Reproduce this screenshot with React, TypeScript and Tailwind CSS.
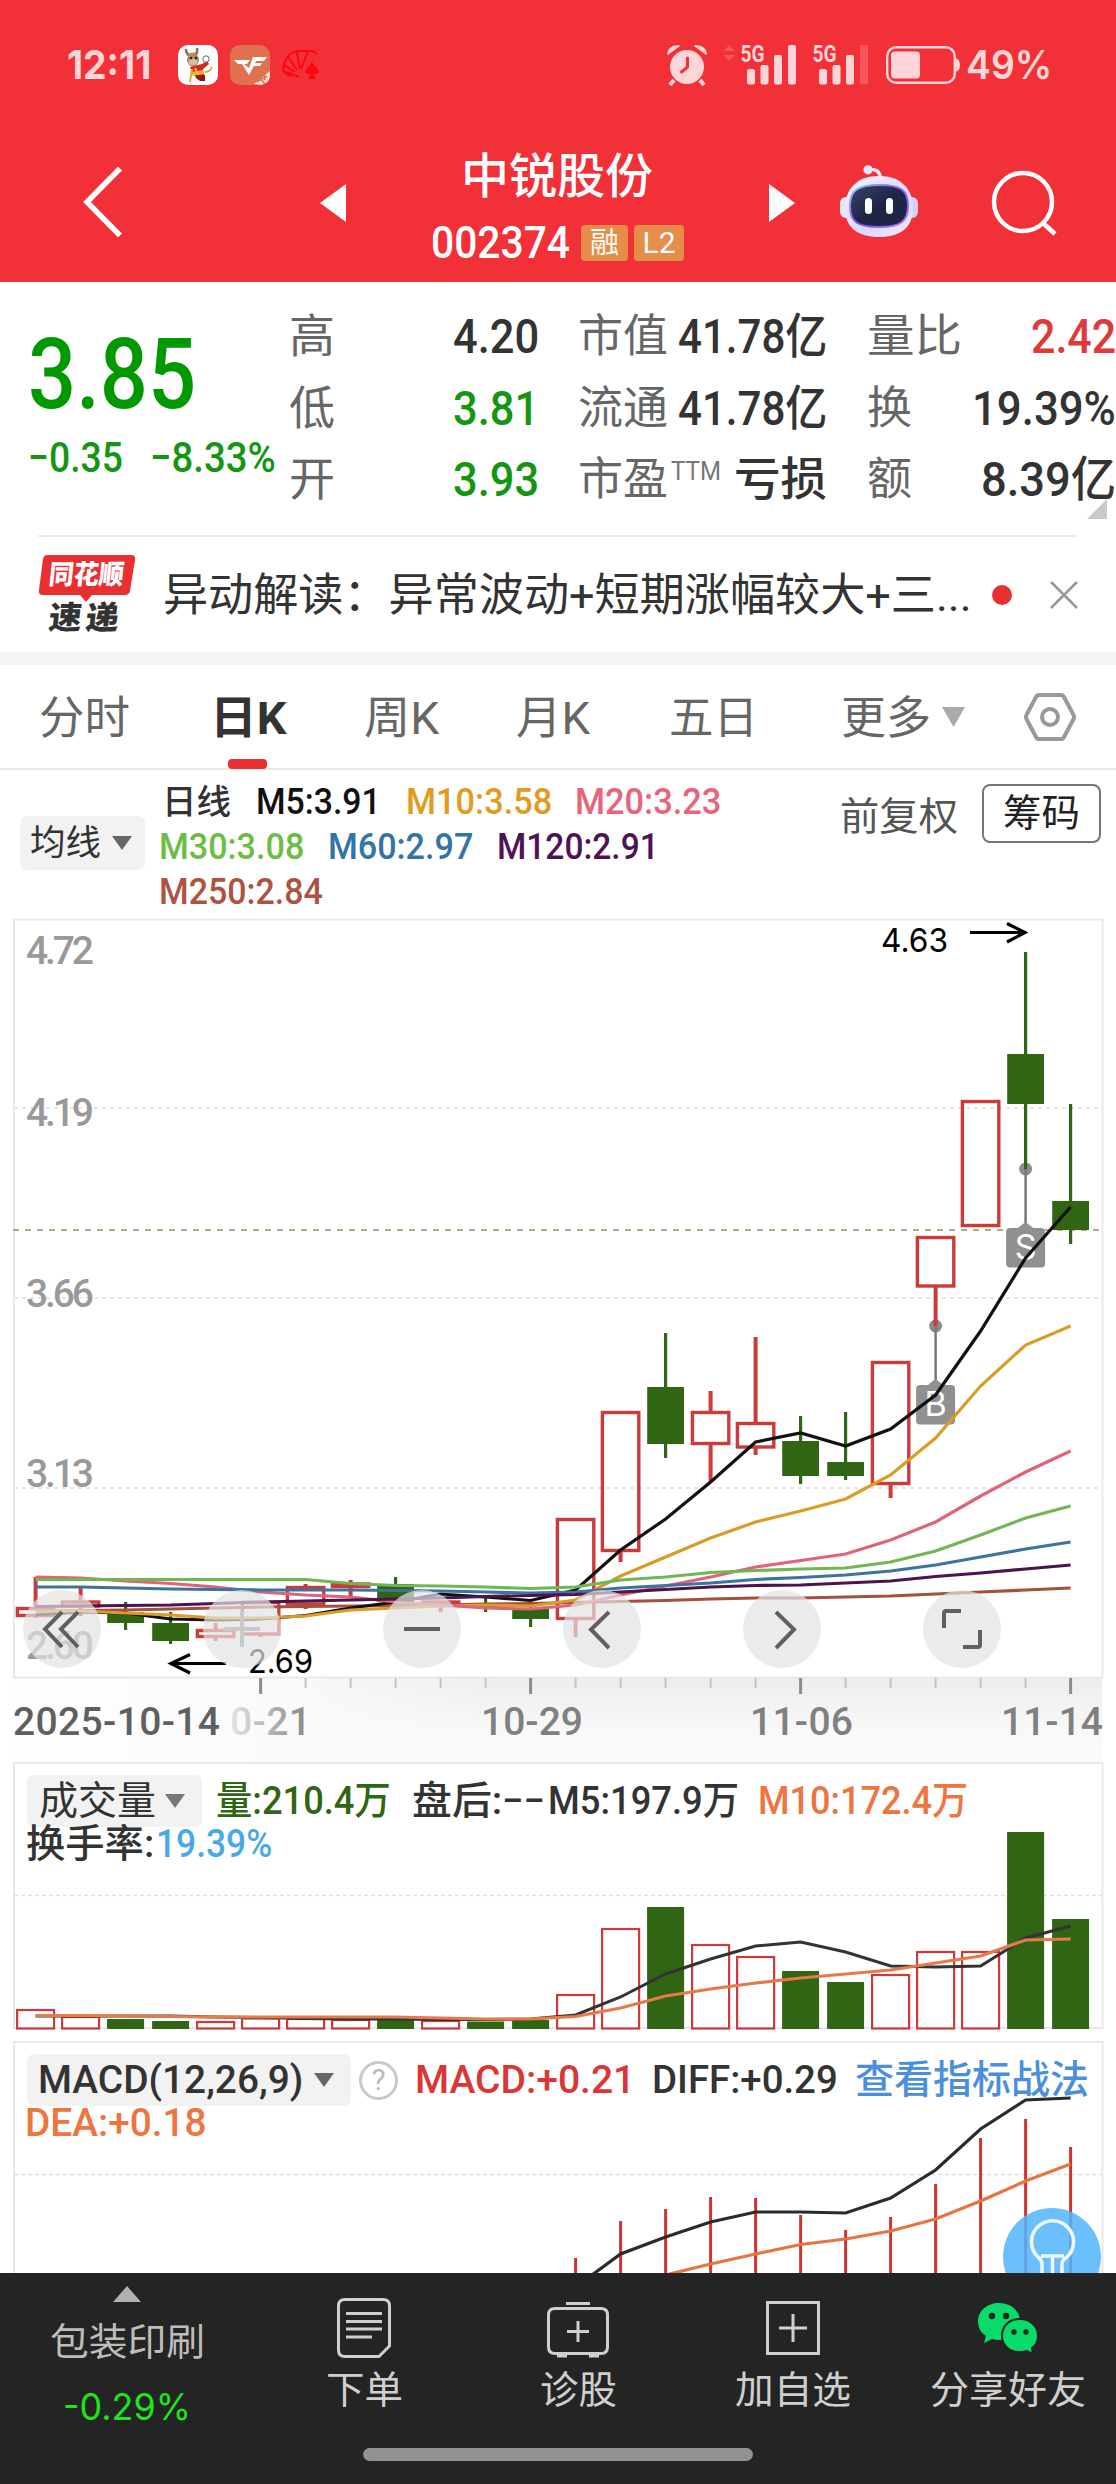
import React, { useLayoutEffect, useRef, useState } from "react";

type FitProps = { className?: string; children: React.ReactNode };

/** Single line of text condensed or widened to fill the width of its box. */
function Fit({ className = "", children }: FitProps) {
  const outer = useRef<HTMLSpanElement>(null);
  const inner = useRef<HTMLSpanElement>(null);
  const [scale, setScale] = useState(1);
  useLayoutEffect(() => {
    if (outer.current && inner.current && inner.current.offsetWidth > 0) {
      setScale(outer.current.clientWidth / inner.current.offsetWidth);
    }
  }, [children]);
  return (
    <span ref={outer} className={"block shrink-0 whitespace-nowrap " + className}>
      <span ref={inner} className="inline-block origin-left align-top" style={{ transform: `scaleX(${scale})` }}>
        {children}
      </span>
    </span>
  );
}

const RED = "#cc3b3b";
const GREEN = "#306514";
const X0 = 35.6;
const STEP = 45;
const cx = (i: number) => X0 + i * STEP;

type Candle = { up: boolean; top: number; bottom: number; high: number; low: number };
const c = (up: boolean, top: number, bottom: number, high: number, low: number): Candle => ({ up, top, bottom, high, low });

const candles: Candle[] = [
  c(true, 1608.5, 1615.5, 1577, 1618),
  c(true, 1602, 1606, 1588, 1616),
  c(false, 1612, 1623, 1602, 1630),
  c(false, 1623, 1641, 1612, 1644),
  c(true, 1630.5, 1636.5, 1623, 1641),
  c(true, 1602.5, 1634, 1601, 1637),
  c(true, 1587.5, 1604, 1584, 1609),
  c(true, 1584, 1586.5, 1580, 1596),
  c(false, 1584, 1602, 1577, 1604),
  c(true, 1602, 1604.5, 1601, 1612),
  c(false, 1604, 1607, 1596, 1612),
  c(false, 1609, 1619, 1604, 1627),
  c(true, 1519.5, 1618.5, 1519, 1637),
  c(true, 1412.5, 1550.5, 1412, 1562),
  c(false, 1387, 1444, 1333, 1458),
  c(true, 1412.5, 1443.5, 1391, 1481),
  c(true, 1423.5, 1447, 1337, 1455),
  c(false, 1441, 1476, 1416, 1484),
  c(false, 1462, 1476, 1412, 1480),
  c(true, 1362.5, 1483.5, 1362, 1498),
  c(true, 1237.5, 1286, 1237, 1326),
  c(true, 1101.5, 1225.5, 1101, 1225),
  c(false, 1054, 1104, 952, 1169),
  c(false, 1201, 1230, 1104, 1244),
];

const averages: { color: string; y: number[] }[] = [
  { color: "#a4503f", y: [1611, 1610.5, 1610, 1609, 1608, 1607, 1606.5, 1606, 1605.5, 1605, 1604, 1603.5, 1602.5, 1601.5, 1600.5, 1599, 1598, 1598, 1597, 1596, 1594, 1592, 1590, 1588] },
  { color: "#111111", y: [1615, 1612, 1613, 1619, 1620, 1619, 1615.5, 1608, 1602, 1594, 1597, 1600.5, 1590, 1550, 1519, 1482, 1442, 1433, 1446, 1429, 1395, 1331, 1258, 1207] },
  { color: "#d99c26", y: [1611, 1611, 1613, 1615, 1618, 1618, 1616, 1610, 1608, 1606, 1605, 1606, 1600, 1576, 1557, 1538, 1522, 1511, 1499, 1475, 1438, 1386, 1345, 1326] },
  { color: "#e06478", y: [1577, 1578, 1581, 1583.5, 1587, 1592, 1595, 1597, 1602, 1605, 1608, 1609, 1605, 1595, 1586, 1577, 1567, 1560.5, 1554, 1540, 1522, 1496, 1472, 1451] },
  { color: "#3d739f", y: [1587, 1587, 1588, 1589, 1589.5, 1590, 1590, 1590, 1590.5, 1591, 1592, 1593, 1592, 1588, 1585.5, 1583, 1579.5, 1577.5, 1575, 1571, 1565, 1557, 1549, 1542] },
  { color: "#4a154b", y: [1606.5, 1606, 1605.5, 1605, 1603.5, 1602, 1601, 1600, 1599, 1598, 1596.5, 1595.5, 1594.5, 1592, 1589.5, 1587, 1585.5, 1585, 1583, 1581, 1576.5, 1573, 1569, 1565] },
  { color: "#70b655", y: [1579.5, 1579.5, 1579.5, 1579.5, 1579.5, 1579.5, 1579.5, 1583.5, 1585.5, 1586, 1587, 1588.5, 1587, 1580, 1577, 1572.5, 1570.5, 1569, 1568, 1562, 1551, 1535, 1518, 1506] },
];

const volumes: [boolean, number][] = [
  [true, 2010], [true, 2017], [false, 2019], [false, 2021], [true, 2022], [true, 2018.5], [true, 2019], [true, 2020],
  [false, 2020], [true, 2021], [false, 2021.5], [false, 2020], [true, 1995], [true, 1929], [false, 1907], [true, 1945],
  [true, 1957], [false, 1971], [false, 1982], [true, 1975], [true, 1952], [true, 1952], [false, 1832], [false, 1919],
];
const vol5 = [2016, 2016, 2016, 2016, 2017, 2017.5, 2018.5, 2019, 2019, 2019.5, 2019.5, 2019, 2015, 1997, 1974, 1959, 1946, 1942, 1952, 1966, 1967, 1966, 1938, 1926];
const vol10 = [2015.5, 2015.5, 2016, 2016.5, 2017, 2017, 2017, 2017, 2017, 2018, 2019, 2019, 2016.5, 2008, 1996, 1989, 1983, 1978, 1974, 1970, 1963, 1956, 1940, 1939];

const macdTops = [2258, 2221, 2209, 2197, 2198, 2215, 2230, 2217, 2184, 2138, 2119, 2147];
const diff = [2287, 2254, 2237, 2222, 2212, 2212, 2213, 2198, 2170, 2129, 2100, 2098];
const dea = [2290, 2284, 2275, 2264, 2254, 2244.5, 2239, 2231, 2219, 2201, 2181, 2164];

const points = (ys: number[], from = 0) => ys.map((y, i) => `${cx(i + from)},${y}`).join(" ");

function Down({ className }: { className: string }) {
  return (
    <svg viewBox="0 0 20 14" preserveAspectRatio="none" className={"shrink-0 " + className}>
      <path d="M0 0H20L10 14Z" fill="currentColor" />
    </svg>
  );
}

function StatusBar() {
  return (
    <div className="flex h-[130px] items-center pl-[67px] text-[#ffd5d7]">
      <Fit className="w-[84px] [font-family:Inter,sans-serif] text-[40px] leading-[44px] font-bold">12:11</Fit>
      <svg viewBox="0 0 40 40" className="ml-[27px] h-10 w-10">
        <rect width="40" height="40" rx="10" fill="#fff" />
        <path d="M8 4Q8 9 12 11M19 3Q20 8 17 10" stroke="#777" strokeWidth="2.6" fill="none" />
        <path d="M11 8L18 7L17 11L11 11Z" fill="#e8951f" />
        <ellipse cx="15" cy="15" rx="6" ry="6.5" fill="#b1896c" />
        <ellipse cx="15" cy="17" rx="4.5" ry="3" fill="#d8bba5" />
        <circle cx="13" cy="13" r="1.2" fill="#222" />
        <circle cx="18" cy="13" r="1.2" fill="#222" />
        <path d="M12 22L24 19L29 16L31 19L25 24L26 30L15 30Z" fill="#d3271f" />
        <path d="M13 27L25 25L26 29L15 31Z" fill="#f0b429" />
        <path d="M17 23L20 29" stroke="#f3c23a" strokeWidth="2" />
        <circle cx="28" cy="14" r="3.2" fill="#fff" stroke="#666" strokeWidth="1" />
        <path d="M17 30H27L27 36H22L18 33Z" fill="#8e1914" />
        <path d="M14 24L12 37M27 27Q32 27 34 22" stroke="#dfa93d" strokeWidth="2" fill="none" />
      </svg>
      <svg viewBox="0 0 40 40" className="ml-3 h-10 w-10">
        <rect width="40" height="40" rx="10" fill="#e0714f" />
        <path d="M4 15H20L17 19H14L19 23L23 12H37L34 16H26L25 18H32L30 21H24L19 30L12 19H8Z" fill="#fff" />
        <path d="M24 39L40 26V31Q39 39 31 40Z" fill="#fbe3d5" />
        <path d="M27 37L37 31M30 33L35 39M34 29L35 35" stroke="#e0714f" strokeWidth="1.6" />
      </svg>
      <svg viewBox="0 0 38 30" className="ml-[12px] h-[30px] w-[38px]">
        <path d="M10 26Q3 25 1 20L2 14Q4 7 10 3Q15 0 21 1Q30 -1 35 4M2 15L13 22M6 7L15 20M15 2L18 19M26 1L19 19M4 22L17 27" stroke="#fa0710" strokeWidth="2" fill="none" />
        <path d="M30 12Q32 16 36 19Q39 24 32 24L34 29H26L28 24Q21 24 24 19Q28 16 30 12Z" fill="#fa0710" />
      </svg>

      <svg viewBox="0 0 40 42" className="ml-[347px] h-[42px] w-10">
        <circle cx="20" cy="23" r="17" fill="currentColor" />
        <path d="M7 36L3 41M33 36L37 41" stroke="currentColor" strokeWidth="4" />
        <path d="M1 9Q3 1 12 2L1 10ZM39 9Q37 1 28 2L39 10Z" fill="currentColor" stroke="currentColor" strokeWidth="1.5" strokeLinejoin="round" />
        <path d="M20.500 14V23L14.500 28" stroke="#f03038" strokeWidth="3" fill="none" strokeLinecap="round" />
      </svg>
      <Signal arrows strong />
      <Signal strong={false} />
      <svg viewBox="0 0 74 38" className="ml-[17px] h-[38px] w-[74px]">
        <rect x="1.200" y="1.200" width="67.600" height="35.600" rx="9" fill="none" stroke="currentColor" strokeWidth="2.400" />
        <rect x="5" y="5.500" width="29" height="27" rx="4" fill="currentColor" />
        <path d="M69 12Q74 13 74 19Q74 25 69 26Z" fill="currentColor" />
      </svg>
      <Fit className="ml-[6px] w-[86px] [font-family:Inter,sans-serif] text-[40px] leading-[44px] font-semibold">49%</Fit>
    </div>
  );
}

function Signal({ arrows = false, strong }: { arrows?: boolean; strong: boolean }) {
  return (
    <svg
      viewBox={arrows ? "0 -10 73 62" : "16 -10 57 62"}
      className={arrows ? "ml-[17px] h-[62px] w-[73px] shrink-0" : "ml-[15px] h-[62px] w-[57px] shrink-0"}
    >
      {arrows && <path d="M5 1L11 7H0ZM5 17L0 11H11Z" fill="#f4575d" />}
      <rect x="23" y="25" width="8" height="15.500" rx="2" fill="currentColor" />
      <rect x="36.500" y="21" width="8" height="19.500" rx="2" fill="currentColor" />
      <rect x="50" y="11" width="8" height="29.500" rx="2" fill="currentColor" />
      <rect x="64" y="1" width="8" height="39.500" rx="2" fill={strong ? "currentColor" : "#f4575d"} />
      <text x="16.500" y="17.500" textLength="24" lengthAdjust="spacingAndGlyphs" fontFamily="Roboto, sans-serif" fontWeight="700" fontSize="24" fill="currentColor">5G</text>
    </svg>
  );
}

function Header() {
  return (
    <header className="h-[282px] bg-[#f23038]">
      <StatusBar />
      <div className="flex h-[152px] items-start text-white">
        <svg viewBox="0 0 40 70" className="mt-[37px] ml-[83px] h-[70px] w-10">
          <path d="M37 1.500L4 35L37 68.500" fill="none" stroke="#fff" strokeWidth="5.500" />
        </svg>
        <svg viewBox="0 0 26 38" className="mt-[54px] ml-[197px] h-[38px] w-[26px]"><path d="M26 0V38L0 19Z" fill="#fff" /></svg>
        <div className="ml-[85px] flex w-[254px] flex-col">
          <Fit className="mt-[20px] ml-[30px] w-[192px] text-[48px] leading-[54px] font-medium">中锐股份</Fit>
          <div className="mt-[17px] flex items-center">
            <Fit className="w-[139px] text-[44px] leading-[44px] font-medium">002374</Fit>
            <span className="ml-[11px] flex h-9 w-[47px] items-center justify-center rounded-[4px] bg-[#e58d49] text-[29px] leading-none">融</span>
            <span className="ml-[6px] flex h-9 w-[50px] items-center justify-center rounded-[4px] bg-[#e58d49] text-[30px] leading-none">L2</span>
          </div>
        </div>
        <svg viewBox="0 0 26 38" className="mt-[54px] ml-[84px] h-[38px] w-[26px]"><path d="M0 0V38L26 19Z" fill="#fff" /></svg>
        <svg viewBox="0 0 78 72" className="mt-[35px] ml-[45px] h-[72px] w-[78px]">
          <defs>
            <linearGradient id="shell" x1="0" y1="0" x2="1" y2="1"><stop offset="0" stopColor="#f7f6ff" /><stop offset="0.600" stopColor="#dcd6f8" /><stop offset="1" stopColor="#f3efff" /></linearGradient>
            <linearGradient id="rim" x1="0" y1="0" x2="1" y2="1"><stop offset="0" stopColor="#7fd3f5" /><stop offset="0.500" stopColor="#7f4be8" /><stop offset="1" stopColor="#a77cf0" /></linearGradient>
            <linearGradient id="face" x1="0" y1="0" x2="1" y2="1"><stop offset="0" stopColor="#3b4468" /><stop offset="0.500" stopColor="#1e2547" /><stop offset="1" stopColor="#1e2547" /></linearGradient>
          </defs>
          <path d="M28 5Q39 2 41 14" stroke="#e9e4fb" strokeWidth="3.500" fill="none" />
          <circle cx="28" cy="4.800" r="4.600" fill="#e9e4fb" />
          <rect x="0" y="32" width="12" height="21" rx="6" fill="#e9e6fc" />
          <rect x="66" y="32" width="12" height="21" rx="6" fill="#d5cff5" />
          <path d="M39 11C61 11 73 24 73 43C73 63 60 72 39 72C18 72 5 63 5 43C5 24 17 11 39 11Z" fill="url(#shell)" />
          <path d="M39 20C60 20 68 25 68 41C68 57 60 62 39 62C18 62 10 57 10 41C10 25 18 20 39 20Z" fill="url(#face)" stroke="url(#rim)" strokeWidth="2" />
          <rect x="25" y="33" width="7" height="16" rx="3.500" fill="#fff" />
          <rect x="46" y="33" width="7" height="16" rx="3.500" fill="#fff" />
        </svg>
        <svg viewBox="0 0 66 66" className="mt-[40px] ml-[73px] h-[66px] w-[66px]">
          <circle cx="32" cy="32" r="29" fill="none" stroke="#fff" strokeWidth="4.500" />
          <path d="M52 53L64 64" stroke="#fff" strokeWidth="4.500" />
        </svg>
      </div>
    </header>
  );
}

function Quote() {
  return (
    <section className="flex h-[253px] bg-white pt-[19px] text-[48px] leading-[71px] font-medium text-[#333]">
      <div className="flex w-[289px] shrink-0 flex-col pl-[28px] text-[#009a00]">
        <Fit className="mt-[22px] w-[168px] text-[98px] leading-[104px]">3.85</Fit>
        <div className="mt-[8px] flex text-[42px] leading-[46px] text-[#149614]">
          <Fit className="w-[95px]">−0.35</Fit>
          <Fit className="ml-[27px] w-[126px]">−8.33%</Fit>
        </div>
      </div>
      <div className="w-[250px] shrink-0">
        <div className="flex h-[71.500px] justify-between"><span className="text-[46px] font-normal text-[#666]">高</span><Fit className="w-[86px]">4.20</Fit></div>
        <div className="flex h-[71.500px] justify-between"><span className="text-[46px] font-normal text-[#666]">低</span><Fit className="w-[86px] text-[#149614]">3.81</Fit></div>
        <div className="flex h-[71.500px] justify-between"><span className="text-[46px] font-normal text-[#666]">开</span><Fit className="w-[86px] text-[#149614]">3.93</Fit></div>
      </div>
      <div className="ml-[39px] w-[249px] shrink-0">
        <div className="flex h-[71.500px] justify-between"><span className="text-[45px] font-normal text-[#666]">市值</span><Fit className="w-[149px]">41.78亿</Fit></div>
        <div className="flex h-[71.500px] justify-between"><span className="text-[45px] font-normal text-[#666]">流通</span><Fit className="w-[149px]">41.78亿</Fit></div>
        <div className="flex h-[71.500px] justify-between">
          <span className="flex text-[45px] font-normal text-[#666]">市盈<Fit className="-mt-[8px] ml-[3px] w-[50px] text-[26px] text-[#777]">TTM</Fit></span>
          <Fit className="w-[93px] text-[46px]">亏损</Fit>
        </div>
      </div>
      <div className="relative ml-[40px] w-[249px] shrink-0">
        <div className="flex h-[71.500px] justify-between"><Fit className="w-[95px] text-[45px] font-normal text-[#666]">量比</Fit><Fit className="w-[85px] text-[#dd3a3a]">2.42</Fit></div>
        <div className="flex h-[71.500px] justify-between"><span className="text-[45px] font-normal text-[#666]">换</span><Fit className="w-[144px]">19.39%</Fit></div>
        <div className="flex h-[71.500px] justify-between"><span className="text-[45px] font-normal text-[#666]">额</span><Fit className="w-[135px]">8.39亿</Fit></div>
        <svg viewBox="0 0 20 20" className="absolute right-[9px] bottom-[16px] h-5 w-5"><path d="M20 0V20H0Z" fill="#c9c9c9" /></svg>
      </div>
    </section>
  );
}

function News() {
  return (
    <section className="mx-[38px] flex h-[117px] items-center border-t-2 border-[#ececec]">
      <div className="relative h-[80px] w-[98px] shrink-0">
        <svg viewBox="0 0 98 80" className="absolute inset-0 h-full w-full">
          <path d="M9 0H93Q98 0 97 5L92 36Q91 40 87 40H54L48 47L42 40H5Q0 40 1 35L5 4Q6 0 9 0Z" fill="#e83033" />
        </svg>
        <Fit className="absolute top-[3px] left-[11px] w-[75px] -skew-x-6 text-[27px] leading-[34px] font-black text-white">同花顺</Fit>
        <Fit className="absolute top-[46px] left-[11px] w-[33px] -skew-x-6 text-[32px] leading-[34px] font-black text-[#333]">速</Fit>
        <Fit className="absolute top-[46px] left-[48px] w-[33px] -skew-x-6 text-[32px] leading-[34px] font-black text-[#333]">递</Fit>
      </div>
      <Fit className="mt-[2px] ml-[27px] w-[809px] text-[45px] leading-[60px] text-[#333]">异动解读：异常波动+短期涨幅较大+三...</Fit>
      <span className="ml-[20px] h-5 w-5 shrink-0 rounded-full bg-[#e93030]" />
      <svg viewBox="0 0 28 28" className="ml-[38px] h-7 w-7 shrink-0"><path d="M1 1L27 27M27 1L1 27" stroke="#999" strokeWidth="2.600" /></svg>
    </section>
  );
}

function Tabs() {
  return (
    <nav className="flex h-[118px] items-center border-t-[13px] border-b-2 border-t-[#f4f4f4] border-b-[#e8e8e8] pt-[4px] pl-[39px] text-[45px] leading-[60px] text-[#666]">
      <Fit className="w-[91px]">分时</Fit>
      <div className="relative ml-[80px]">
        <Fit className="w-[77px] font-bold text-[#333]">日K</Fit>
        <span className="absolute -bottom-[20px] left-[18px] h-[10px] w-[39px] rounded-[4px] bg-[#e93030]" />
      </div>
      <Fit className="ml-[77px] w-[75px]">周K</Fit>
      <Fit className="ml-[77px] w-[74px]">月K</Fit>
      <Fit className="ml-[79px] w-[89px]">五日</Fit>
      <Fit className="ml-[83px] w-[90px]">更多</Fit>
      <Down className="-mt-[3px] ml-[11px] h-[20px] w-[23px] text-[#aaa]" />
      <svg viewBox="0 0 54 50" className="-mt-[3px] ml-[58px] h-[50px] w-[54px]">
        <path d="M16 3H38Q40 3 41 5L50 22Q52 25 50 28L41 45Q40 47 38 47H16Q14 47 13 45L4 28Q2 25 4 22L13 5Q14 3 16 3Z" fill="none" stroke="#999" strokeWidth="4" />
        <circle cx="27" cy="25" r="8" fill="none" stroke="#999" strokeWidth="4" />
      </svg>
    </nav>
  );
}

function Legend() {
  return (
    <section className="flex h-[148px] pl-5 text-[36px] leading-[45px] font-medium">
      <div className="mt-[46px] flex h-[54px] w-[125px] items-center rounded-[7px] bg-[#f2f2f2] pl-[10px] text-[#333]">
        <Fit className="w-[71px] text-[35px] font-normal">均线</Fit>
        <Down className="ml-[11px] h-[14px] w-5 text-[#666]" />
      </div>
      <div className="mt-[10px] ml-[14px] w-[680px]">
        <div className="flex">
          <Fit className="ml-[3px] w-[69px] text-[34px] text-[#333]">日线</Fit>
          <Fit className="ml-[25px] w-[125px] text-[#111]">M5:3.91</Fit>
          <Fit className="ml-[25px] w-[146px] text-[#df9c1e]">M10:3.58</Fit>
          <Fit className="ml-[23px] w-[146px] text-[#e8647a]">M20:3.23</Fit>
        </div>
        <div className="flex">
          <Fit className="w-[145px] text-[#6cbd45]">M30:3.08</Fit>
          <Fit className="ml-[24px] w-[145px] text-[#3374a8]">M60:2.97</Fit>
          <Fit className="ml-[24px] w-[162px] text-[#4f1254]">M120:2.91</Fit>
        </div>
        <Fit className="w-[164px] text-[#ae5242]">M250:2.84</Fit>
      </div>
      <Fit className="mt-[25px] ml-[1px] w-[118px] text-[39px] font-normal text-[#555]">前复权</Fit>
      <div className="mt-[14px] ml-[24px] flex h-[59px] w-[119px] items-center justify-center rounded-[8px] border-2 border-[#777] text-[#222]">
        <Fit className="w-[77px] text-[38px] font-normal">筹码</Fit>
      </div>
    </section>
  );
}

const DIN = { fontFamily: "Roboto, sans-serif", fontWeight: 500, lengthAdjust: "spacingAndGlyphs" } as const;

function Marker({ x, dot, y, letter }: { x: number; dot: number; y: number; letter: string }) {
  return (
    <g>
      <path d={`M${x} ${dot}V${y - 4}`} stroke="#777" strokeWidth="2.500" />
      <path d={`M${x - 9} ${y + 1}L${x} ${y - 6}L${x + 9} ${y + 1}Z`} fill="#909090" />
      <rect x={x - 19.500} y={y} width="39" height="39.500" rx="4" fill="#909090" />
      <text x={x} y={y + 31} textAnchor="middle" fontFamily="Inter, sans-serif" fontSize="34" fill="#fff">{letter}</text>
    </g>
  );
}

function PriceChart() {
  return (
    <svg viewBox="0 918 1116 844" className="block h-[844px] w-[1116px]">
      <defs>
        <linearGradient id="axisBand" x1="0" y1="0" x2="0" y2="1"><stop offset="0" stopColor="#ededed" /><stop offset="0.600" stopColor="#f8f8f8" /><stop offset="1" stopColor="#fafafa" /></linearGradient>
        <linearGradient id="axisFade" x1="0" y1="0" x2="1" y2="0"><stop offset="0" stopColor="#fff" /><stop offset="0.550" stopColor="#fafafa" /><stop offset="1" stopColor="#fafafa" stopOpacity="0" /></linearGradient>
        <linearGradient id="dateFade" x1="0" y1="0" x2="1" y2="0"><stop offset="0" stopColor="#e4e4e4" /><stop offset="1" stopColor="#858585" /></linearGradient>
      </defs>
      <rect x="0" y="1678" width="1102" height="84" fill="url(#axisBand)" />
      <rect x="0" y="1678" width="500" height="84" fill="url(#axisFade)" />
      <path d="M14 1677.500V919.500H1102.500V1677.500Z" fill="none" stroke="#e9e9e9" strokeWidth="2" />
      <path d="M14 1108H1102M14 1298H1102M14 1488H1102" stroke="#e6e6e6" strokeWidth="2" strokeDasharray="4 4" />
      <g {...DIN} fontSize="39" fill="#999">
        <text x="26" y="964" textLength="68">4.72</text>
        <text x="26" y="1126" textLength="68">4.19</text>
        <text x="26" y="1307" textLength="68">3.66</text>
        <text x="26" y="1487" textLength="68">3.13</text>
        <text x="26" y="1659" textLength="68">2.60</text>
      </g>
      <path d="M13 1230H1102" stroke="#b5aa88" strokeWidth="2" strokeDasharray="6 6" />
      <circle cx={cx(20)} cy="1326" r="6.500" fill="#8c8c8c" />
      <circle cx={cx(22)} cy="1169" r="6.500" fill="#8c8c8c" />
      {candles.map((k, i) => (
        <g key={i}>
          {k.up ? (
            <>
              <path d={`M${cx(i)} ${k.high}V${k.top}M${cx(i)} ${k.bottom}V${k.low}`} stroke={RED} strokeWidth="4" />
              <rect x={cx(i) - 18.200} y={k.top} width="36.400" height={k.bottom - k.top} fill="none" stroke={RED} strokeWidth="3.400" />
            </>
          ) : (
            <>
              <path d={`M${cx(i)} ${k.high}V${k.low}`} stroke={GREEN} strokeWidth="3.200" />
              <rect x={cx(i) - 18.400} y={k.top} width="36.800" height={k.bottom - k.top} fill={GREEN} />
            </>
          )}
        </g>
      ))}
      <Marker x={cx(20)} dot={1326} y={1385} letter="B" />
      <Marker x={cx(22)} dot={1169} y={1228} letter="S" />
      {averages.map((a, i) => (
        <polyline key={i} points={points(a.y)} fill="none" stroke={a.color} strokeWidth="3.200" />
      ))}
      <g stroke="#000" strokeWidth="3.200" fill="none">
        <path d="M970 932.500H1025M1007 923.500L1025 932.500L1007 942" />
        <path d="M226 1663.500H171M190 1654.500L171 1663.500L190 1673" />
      </g>
      <g fontFamily="Inter, sans-serif" fontSize="33" fill="#000">
        <text x="881" y="952" textLength="67" lengthAdjust="spacingAndGlyphs">4.63</text>
        <text x="248" y="1673" textLength="65" lengthAdjust="spacingAndGlyphs">2.69</text>
      </g>
      <g fill="#e3e3e3" fillOpacity="0.700">
        {[62, 242, 422, 602, 782, 962].map((x) => <circle key={x} cx={x} cy="1629" r="39" />)}
      </g>
      <g fill="none" stroke="#606060" strokeWidth="4">
        <path d="M62 1612L45 1629L62 1647M78 1612L61 1629L78 1647" />
        <path d="M242 1611V1647M224 1629H260" stroke="#c9c9c9" />
        <path d="M404 1629H440" />
        <path d="M609 1612L591 1629.500L609 1648M776 1612L794 1629.500L776 1648" />
        <path d="M944 1628V1613.500Q944 1611 946 1611H961M980 1630V1645Q980 1647 978 1647H963" />
      </g>
      {Array.from({ length: 19 }, (_, k) => k + 5).map((i) => {
        const major = (i - 5) % 6 === 0;
        return <path key={i} d={`M${cx(i)} 1678V${major ? 1694 : 1688}`} stroke={major ? "#8c8c8c" : "#c4c4c4"} strokeWidth={major ? 3 : 2} />;
      })}
      <g {...DIN} fontSize="39" fill="#808080">
        <text x="13" y="1735" textLength="207" fill="#5f5f5f">2025-10-14</text>
        <text x="230" y="1735" textLength="81" fill="url(#dateFade)">0-21</text>
        <text x="481" y="1735" textLength="102">10-29</text>
        <text x="750" y="1735" textLength="103">11-06</text>
        <text x="1001" y="1735" textLength="102">11-14</text>
      </g>
    </svg>
  );
}

function VolumePanel() {
  return (
    <section className="relative h-[279px] pt-[13px] text-[39px] leading-[42px] font-medium text-[#333]">
      <svg viewBox="0 1762 1116 279" className="absolute inset-0 h-full w-full">
        <path d="M14 2028V1763H1102.500V2028Z" fill="none" stroke="#e9e9e9" strokeWidth="2" />
        <path d="M14 1895.500H1102" stroke="#dedede" strokeWidth="1.500" strokeDasharray="4 3" />
        {volumes.map(([up, y], i) =>
          up ? (
            <rect key={i} x={cx(i) - 18.500} y={y} width="37" height={2028.500 - y} fill="none" stroke={RED} strokeWidth="2.200" />
          ) : (
            <rect key={i} x={cx(i) - 18.500} y={y} width="37" height={2029 - y} fill={GREEN} />
          ),
        )}
        <polyline points={points(vol5)} fill="none" stroke="#333" strokeWidth="3" />
        <polyline points={points(vol10)} fill="none" stroke="#e67a4b" strokeWidth="3.200" />
      </svg>
      <div className="relative flex h-[52px] items-center pl-[27px]">
        <div className="flex h-[52px] w-[175px] shrink-0 items-center rounded-[7px] bg-[#f2f2f2] pl-[12px]">
          <Fit className="w-[117px] font-normal">成交量</Fit>
          <Down className="ml-[9px] h-[14px] w-5 text-[#777]" />
        </div>
        <Fit className="ml-[14px] w-[175px] text-[#306514]">量:210.4万</Fit>
        <Fit className="ml-[21px] w-[90px]">盘后:</Fit>
        <Fit className="w-[43px]">−−</Fit>
        <Fit className="ml-[3px] w-[191px]">M5:197.9万</Fit>
        <Fit className="ml-[19px] w-[210px] text-[#ed7540]">M10:172.4万</Fit>
      </div>
      <div className="relative -mt-[4px] flex pl-[26px]">
        <Fit className="w-[128px]">换手率:</Fit>
        <Fit className="ml-[2px] w-[116px] text-[#49a9e6]">19.39%</Fit>
      </div>
    </section>
  );
}

function MacdPanel() {
  return (
    <section className="relative h-[232px] overflow-hidden pt-[13px] text-[39px] leading-[42px] font-medium text-[#333]">
      <svg viewBox="0 2041 1116 232" className="absolute inset-0 h-full w-full">
        <path d="M14 2300V2042H1102.500V2300" fill="none" stroke="#e9e9e9" strokeWidth="2" />
        <path d="M14 2174.500H1102" stroke="#dedede" strokeWidth="1.500" strokeDasharray="4 3" />
        {macdTops.map((y, i) => <path key={i} d={`M${cx(i + 12)} ${y}V2273`} stroke="#cf3434" strokeWidth="3" />)}
        <polyline points={points(diff, 12)} fill="none" stroke="#2b2b2b" strokeWidth="3.200" />
        <polyline points={points(dea, 12)} fill="none" stroke="#e8743f" strokeWidth="3.200" />
        <circle cx="1052" cy="2257" r="49" fill="#52b4fc" fillOpacity="0.860" />
        <path d="M1042 2274V2264Q1042 2260 1038 2257A21 21 0 1 1 1067 2257Q1062 2260 1062 2264V2274M1041 2256H1064M1052.500 2256V2274" fill="none" stroke="#f0f9ff" strokeWidth="3.500" />
      </svg>
      <div className="relative flex h-[52px] items-center pl-[27px]">
        <div className="flex h-[52px] w-[324px] shrink-0 items-center rounded-[7px] bg-[#f2f2f2] pl-[11px]">
          <Fit className="w-[265px]">MACD(12,26,9)</Fit>
          <Down className="ml-[11px] h-[14px] w-5 text-[#666]" />
        </div>
        <span className="ml-[8px] flex h-[39px] w-[39px] shrink-0 items-center justify-center rounded-full border-[3px] border-[#c9c9c9] text-[30px] leading-none font-normal text-[#bbb]">?</span>
        <Fit className="ml-[17px] w-[220px] text-[#db3535]">MACD:+0.21</Fit>
        <Fit className="ml-[17px] w-[186px]">DIFF:+0.29</Fit>
        <Fit className="ml-[17px] w-[234px] text-[#4a8fdb]">查看指标战法</Fit>
      </div>
      <Fit className="relative -mt-[4px] ml-[25px] w-[182px] text-[#ed7540]">DEA:+0.18</Fit>
    </section>
  );
}

function BottomBar() {
  return (
    <footer className="flex h-[211px] flex-col items-center bg-[#242424] text-[38px] leading-[44px] text-[#cfcfcf]">
      <div className="flex h-[175px] w-full">
        <div className="flex w-[204px] flex-col items-center pl-[50px]">
          <svg viewBox="0 0 28 16" className="mt-[13px] h-4 w-7"><path d="M14 0L28 16H0Z" fill="#b0b0b0" /></svg>
          <Fit className="mt-[18px] w-[155px] text-[#bdbdbd]">包装印刷</Fit>
          <Fit className="mt-[21px] w-[128px] [font-family:Inter,sans-serif] text-[37px] text-[#1ce51c]">-0.29%</Fit>
        </div>
        <div className="ml-[121px] flex w-[78px] flex-col items-center">
          <svg viewBox="0 0 54 60" className="mt-[25px] h-[60px] w-[54px]" fill="none" stroke="#cfcfcf" strokeWidth="3">
            <path d="M8 1.500H46Q52.500 1.500 52.500 8V48L42 58.500H8Q1.500 58.500 1.500 52V8Q1.500 1.500 8 1.500Z" />
            <path d="M9 15.500H45M9 23.500H45M9 31H45M9 39H35" />
          </svg>
          <Fit className="mt-[10px] w-[77px]">下单</Fit>
        </div>
        <div className="ml-[136px] flex w-[78px] flex-col items-center">
          <svg viewBox="0 0 62 58" className="mt-[27px] h-[58px] w-[62px]" fill="none" stroke="#cfcfcf" strokeWidth="3">
            <path d="M19 3.500H43M8 8.500H54Q60.500 8.500 60.500 15V47Q60.500 53.500 54 53.500H8Q1.500 53.500 1.500 47V15Q1.500 8.500 8 8.500ZM10 56H20M42 56H52" />
            <path d="M31 21V42M20 31.500H42" />
          </svg>
          <Fit className="mt-[10px] w-[77px]">诊股</Fit>
        </div>
        <div className="ml-[117px] flex w-[118px] flex-col items-center">
          <svg viewBox="0 0 54 54" className="mt-[28px] h-[54px] w-[54px]" fill="none" stroke="#cfcfcf" strokeWidth="3">
            <path d="M1.500 1.500H52.500V52.500H1.500ZM27 13V41M13 27H41" />
          </svg>
          <Fit className="mt-[13px] w-[116px]">加自选</Fit>
        </div>
        <div className="ml-[77px] flex w-[158px] flex-col items-center">
          <svg viewBox="0 0 60 52" className="mt-[30px] h-[52px] w-[60px]">
            <path d="M21 0C33 0 42 8 42 18.500C42 29 33 37 21 37Q17 37 14 36L6 40L8 33Q0 28 0 18.500C0 8 9 0 21 0Z" fill="#07dc6b" />
            <circle cx="14" cy="13" r="3.200" fill="#242424" /><circle cx="28" cy="13" r="3.200" fill="#242424" />
            <path d="M42 16C52 16 60 23 60 33Q60 41 54 45L55 51L49 48Q46 49 42 49C31 49 24 42 24 33C24 23 31 16 42 16Z" fill="#07dc6b" stroke="#242424" strokeWidth="2" />
            <circle cx="36" cy="29" r="2.700" fill="#242424" /><circle cx="48" cy="29" r="2.700" fill="#242424" />
          </svg>
          <Fit className="mt-[13px] w-[156px]">分享好友</Fit>
        </div>
      </div>
      <span className="h-[13px] w-[390px] rounded-full bg-[#929292]" />
    </footer>
  );
}

export default function App() {
  return (
    <div className="h-[2484px] w-[1116px] overflow-hidden bg-white [font-family:Roboto,'Noto_Sans_CJK_SC',sans-serif]">
      <Header />
      <Quote />
      <News />
      <Tabs />
      <Legend />
      <PriceChart />
      <VolumePanel />
      <MacdPanel />
      <BottomBar />
    </div>
  );
}
